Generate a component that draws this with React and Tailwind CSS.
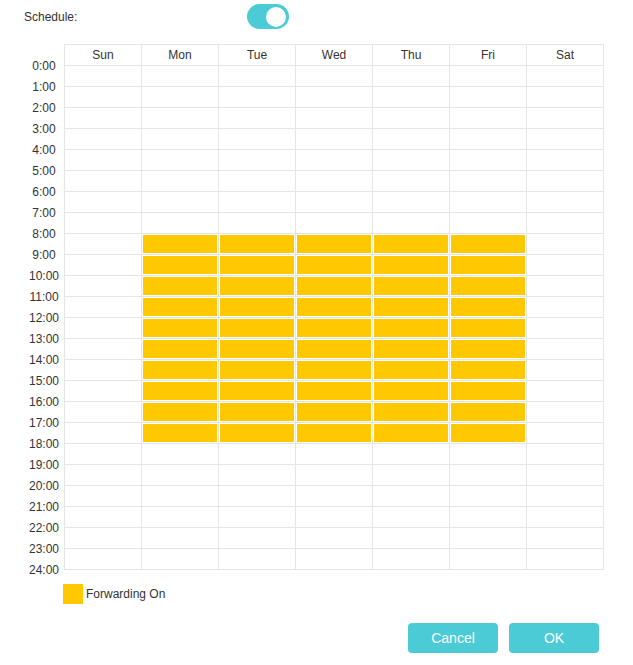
import React from "react";

const days = ["Sun", "Mon", "Tue", "Wed", "Thu", "Fri", "Sat"];
const hours = Array.from({ length: 24 }, (_, i) => i);
const labels = Array.from({ length: 25 }, (_, i) => `${i}:00`);

export default function App() {
  return (
    <div className="w-[633px] h-[665px] bg-white text-[#333333] text-[12px] font-['Liberation_Sans',Arial,sans-serif] overflow-hidden">
      <div className="flex items-center h-[25px] mt-[4px] pl-[24px]">
        <div className="w-[223px]">Schedule:</div>
        <div className="w-[42px] h-[25px] rounded-full bg-[#4acbd6] flex items-center justify-end pr-[3px]">
          <div className="w-[20px] h-[20px] rounded-full bg-white" />
        </div>
      </div>

      <div className="flex items-start mt-[15px]">
        <div className="w-[64px] pl-[24px] pt-[12px]">
          {labels.map((l) => (
            <div key={l} className="w-[40px] h-[21px] leading-[21px] text-center">
              {l}
            </div>
          ))}
        </div>
        <div className="border-t border-l border-[#e5e5e5]">
          <div className="flex">
            {days.map((d) => (
              <div
                key={d}
                className="w-[77px] h-[21px] border-r border-b border-[#e5e5e5] flex items-center justify-center"
              >
                {d}
              </div>
            ))}
          </div>
          {hours.map((h) => (
            <div key={h} className="flex">
              {days.map((d, di) => {
                const on = di >= 1 && di <= 5 && h >= 8 && h < 18;
                return (
                  <div
                    key={d}
                    className="w-[77px] h-[21px] border-r border-b border-[#e5e5e5] p-[1px]"
                  >
                    {on && <div className="w-[74px] h-[18px] bg-[#ffc800]" />}
                  </div>
                );
              })}
            </div>
          ))}
        </div>
      </div>

      <div className="flex items-center mt-[3px] pl-[63px]">
        <div className="w-[20px] h-[20px] bg-[#ffc800]" />
        <span className="ml-[3px]">Forwarding On</span>
      </div>

      <div className="flex justify-end gap-[11px] mt-[19px] pr-[34px]">
        <button className="w-[90px] h-[30px] rounded-[4px] bg-[#4acbd6] text-white text-[14px] pt-[1px]">
          Cancel
        </button>
        <button className="w-[90px] h-[30px] rounded-[4px] bg-[#4acbd6] text-white text-[14px] pt-[1px]">
          OK
        </button>
      </div>
    </div>
  );
}
